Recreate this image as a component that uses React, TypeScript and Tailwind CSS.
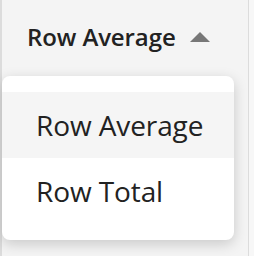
export default function App() {
  return (
    <div className="w-[254px] h-[256px] bg-[#f4f4f4] flex overflow-hidden" style={{ fontFamily: '"Open Sans", sans-serif' }}>
      <div className="w-[2px] bg-[#dcdcdc]" />
      <div className="w-[246px] flex flex-col">
        <div className="h-[76px] flex items-start pt-[21px] pl-[25px]">
          <span className="text-[24px] font-semibold text-[#222] leading-[32px] tracking-[-0.1px]">Row Average</span>
          <svg width="20" height="10" viewBox="0 0 20 10" className="ml-[14px] mt-[11px]">
            <polygon points="10,0 20,10 0,10" fill="#777" />
          </svg>
        </div>
        <div className="w-[232px] bg-white rounded-[8px] shadow-[0_4px_14px_rgba(0,0,0,0.18)] py-[16px]">
          <div className="h-[66px] bg-[#f5f5f5] flex items-center pl-[34px] text-[28px] text-[#222] tracking-[-0.1px]">Row Average</div>
          <div className="h-[66px] flex items-center pl-[34px] text-[28px] text-[#222] tracking-[-0.1px]">Row Total</div>
        </div>
      </div>
      <div className="w-[1px] bg-[#dcdcdc]" />
      <div className="flex-1 bg-[#f7f7f7]" />
    </div>
  );
}
